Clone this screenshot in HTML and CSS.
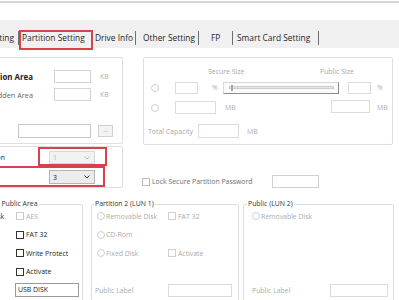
FILE: index.html
```html
<!DOCTYPE html>
<html lang="en">
<head>
<meta charset="utf-8">
<title>Partition Setting</title>
<link rel="stylesheet" href="styles.css">
</head>
<body>
<div class="titlebar"></div>
<nav class="tabbar">
  <span class="tab tab-basic">Basic Setting</span>
  <span class="tab tab-partition">Partition Setting</span>
  <span class="tab tab-drive">Drive Info</span>
  <span class="tab tab-other">Other Setting</span>
  <span class="tab tab-fp">FP</span>
  <span class="tab tab-smart">Smart Card Setting</span>
</nav>
<main class="content">
  <div class="top-row">
    <div class="left-col">
      <section class="box area-box">
        <div class="area-grid">
          <span class="lbl lbl-strong">Partition Area</span><span class="field w37"></span><span class="unit">KB</span>
          <span class="lbl lbl-soft">Hidden Area</span><span class="field w37"></span><span class="unit">KB</span>
        </div>
        <div class="path-row"><span class="field path"></span><span class="btn">...</span></div>
      </section>
      <section class="box count-box">
        <div class="count-grid">
          <span class="lbl">Number of Partition</span>
          <span class="select is-disabled"><span>1</span><svg width="6" height="4" viewBox="0 0 6 4"><polyline points="0.5,0.5 3,3 5.5,0.5" fill="none" stroke="currentColor" stroke-width="0.9"/></svg></span>
          <span class="lbl lbl-short">LUN</span>
          <span class="select"><span>3</span><svg width="6" height="4" viewBox="0 0 6 4"><polyline points="0.5,0.5 3,3 5.5,0.5" fill="none" stroke="currentColor" stroke-width="0.9"/></svg></span>
        </div>
      </section>
    </div>
    <div class="right-col">
      <section class="box size-box">
        <div class="size-head"><span class="head-secure">Secure Size</span><span>Public Size</span></div>
        <div class="size-row r1">
          <span class="radio"></span>
          <span class="field f-pct"></span>
          <span class="unit u-pct">%</span>
          <span class="slider"><span class="slider-track"><span class="slider-thumb"></span></span></span>
          <span class="field f-pct2"></span>
          <span class="unit u-end">%</span>
        </div>
        <div class="size-row r2">
          <span class="radio"></span>
          <span class="field f-mb"></span>
          <span class="unit u-mb">MB</span>
          <span class="field f-mb2"></span>
          <span class="unit u-end">MB</span>
        </div>
        <div class="size-row r3">
          <span class="total-lbl">Total Capacity</span>
          <span class="field f-total"></span>
          <span class="unit u-total">MB</span>
        </div>
      </section>
      <div class="lock-row">
        <span class="check is-soft"></span>
        <span class="lock-text">Lock Secure Partition Password</span>
        <span class="field f-lock"></span>
      </div>
    </div>
  </div>

  <div class="group-row">
    <section class="group g1">
      <div class="group-title title-right">Partition 1 (LUN 0) Public Area</div>
      <div class="group-grid">
        <span class="opt"><span class="radio on"></span>Removable Disk</span>
        <span class="opt is-disabled"><span class="check"></span>AES</span>
        <span class="opt"><span class="radio"></span>CD-Rom</span>
        <span class="opt"><span class="check"></span>FAT 32</span>
        <span class="opt"><span class="radio"></span>Fixed Disk</span>
        <span class="opt"><span class="check"></span>Write Protect</span>
        <span></span>
        <span class="opt"><span class="check"></span>Activate</span>
        <span class="opt-lbl">Public Label</span>
        <span class="field f-label">USB DISK</span>
      </div>
    </section>
    <section class="group g2 is-disabled">
      <div class="group-title">Partition 2 (LUN 1)</div>
      <div class="group-grid">
        <span class="opt"><span class="radio"></span>Removable Disk</span>
        <span class="opt"><span class="check"></span>FAT 32</span>
        <span class="opt"><span class="radio"></span>CD-Rom</span>
        <span></span>
        <span class="opt"><span class="radio"></span>Fixed Disk</span>
        <span class="opt"><span class="check"></span>Activate</span>
        <span></span><span></span>
        <span class="opt-lbl">Public Label</span>
        <span class="field f-label2"></span>
      </div>
    </section>
    <section class="group g3 is-disabled">
      <div class="group-title">Public (LUN 2)</div>
      <div class="group-grid">
        <span class="opt"><span class="radio"></span>Removable Disk</span>
        <span></span>
        <span></span><span></span>
        <span></span><span></span>
        <span></span><span></span>
        <span class="opt-lbl">Public Label</span>
        <span class="field f-label3"></span>
      </div>
    </section>
  </div>
</main>

<div class="mark mark-tab"></div>
<div class="mark mark-count1"></div>
<div class="mark mark-count2"></div>
</body>
</html>
```

FILE: styles.css
```css
* { box-sizing: border-box; }

body {
  margin: 0;
  width: 399px;
  height: 300px;
  overflow: hidden;
  position: relative;
  background: #fff;
  font-family: "Open Sans", "Liberation Sans", sans-serif;
  font-size: 6.9px;
  color: #333;
}

.titlebar {
  height: 19px;
  margin-top: 1px;
  border-top: 2px solid #d6d6d6;
}

/* tabs */
.tabbar {
  display: flex;
  height: 28px;
  padding-top: 11px;
  background: #f0f0f0;
  font-size: 8.4px;
  color: #262626;
}
.tab {
  flex: none;
  height: 14px;
  line-height: 14px;
  border-right: 1px solid #707070;
  white-space: nowrap;
  overflow: hidden;
}
.tab-basic { width: 60px; margin-left: -41px; text-align: right; padding-right: 4px; }
.tab-partition { width: 74px; padding-left: 3px; }
.tab-drive { width: 43px; padding-left: 2px; }
.tab-other { width: 63px; padding-left: 7px; }
.tab-fp { width: 34px; padding-left: 12px; }
.tab-smart { width: 86px; padding-left: 4px; }

.content { padding-top: 9px; }

.top-row { display: flex; }
.left-col {
  flex: none;
  width: 223px;
  margin-left: -100px;
  display: flex;
  flex-direction: column;
  gap: 2px;
}
.right-col { flex: none; width: 250px; margin-left: 20px; }

.box {
  border: 1px solid #dedede;
  border-radius: 2px;
}

/* generic controls */
.field {
  display: block;
  flex: none;
  height: 13px;
  border: 1px solid #d4d4d4;
  background: #fff;
}
.unit { color: #b0b0b0; flex: none; }
.radio {
  flex: none;
  width: 8px;
  height: 8px;
  border: 1px solid #cfcfcf;
  border-radius: 50%;
  background: #fff;
}
.check {
  flex: none;
  width: 8px;
  height: 8px;
  border: 1px solid #333;
  background: #fff;
}

/* area box */
.area-box { height: 87px; padding-top: 12px; }
.area-grid {
  display: grid;
  grid-template-columns: 153px 46px auto;
  grid-auto-rows: 13px;
  row-gap: 5px;
  align-items: center;
}
.lbl { justify-self: end; white-space: nowrap; }
.area-grid .lbl { padding-right: 21px; }
.lbl-strong { font-weight: 700; font-size: 7.9px; color: #1e1e1e; }
.lbl-soft { color: #666; font-size: 7.3px; }
.w37 { width: 37px; }
.path-row {
  display: flex;
  align-items: center;
  margin-top: 23px;
  padding-left: 117px;
}
.path { width: 73px; height: 14px; border-color: #c8c8c8; }
.btn {
  width: 15px;
  height: 12px;
  margin-left: 7px;
  border: 1px solid #d0d0d0;
  background: #f3f3f3;
  color: #888;
  font-size: 6px;
  line-height: 9px;
  text-align: center;
}

/* count box */
.count-box { height: 42px; padding-top: 4px; }
.count-grid {
  display: grid;
  grid-template-columns: 148px 46px;
  grid-template-rows: 13px 14px;
  row-gap: 6px;
  align-items: center;
}
.count-grid .lbl { padding-right: 44px; color: #222; }
.count-grid .lbl-short { padding-right: 56px; }
.select {
  display: flex;
  align-items: center;
  justify-content: space-between;
  height: 100%;
  padding: 0 4px 0 3px;
  border: 1px solid #b4b4b4;
  background: #ececec;
  color: #222;
}
.select.is-disabled {
  border-color: #d8d8d8;
  background: #f2f2f2;
  color: #b4b4b4;
}

/* size box */
.size-box { height: 88px; padding-top: 8px; color: #a8a8a8; }
.size-box .field { border-color: #dcdcdc; }
.size-head {
  display: flex;
  align-items: center;
  height: 10px;
  padding-left: 64px;
}
.head-secure { width: 112px; }
.size-row { display: flex; align-items: center; }
.size-row.r1 { margin-top: 5px; height: 13px; padding-left: 7px; }
.size-row.r2 { margin-top: 6px; height: 15px; padding-left: 7px; }
.size-row.r3 { margin-top: 9px; height: 14px; padding-left: 4px; }
.f-pct { width: 23px; height: 12px; margin-left: 16px; }
.u-pct { width: 11px; margin-left: 14px; }
.slider {
  display: flex;
  align-items: center;
  flex: none;
  width: 116px;
  height: 12px;
  padding: 0 4px 0 5px;
  border: 1px solid #d8d8d8;
  border-right-color: #8c8c8c;
  border-bottom-color: #8c8c8c;
  background: #fbfbfb;
}
.slider-track {
  display: flex;
  align-items: center;
  flex: 1;
  height: 3px;
  border: 1px solid #cdcdcd;
  background: #e6e6e6;
}
.slider-thumb {
  width: 2px;
  height: 6px;
  margin-left: 1px;
  background: #a8a8a8;
}
.f-pct2 { width: 23px; height: 12px; margin-left: 9px; }
.u-end { margin-left: 6px; }
.f-mb { width: 41px; margin-left: 16px; }
.u-mb { width: 106px; margin-left: 9px; }
.f-mb2 { width: 39px; margin-top: -2px; }
.size-row.r2 .u-end { margin-left: 7px; }
.total-lbl { width: 50px; flex: none; white-space: nowrap; }
.f-total { width: 41px; height: 14px; }
.u-total { margin-left: 8px; }

/* lock row */
.lock-row {
  display: flex;
  align-items: center;
  height: 13px;
  margin-top: 30px;
  margin-left: -1px;
  color: #6e6e6e;
}
.check.is-soft { border-color: #bdbdbd; }
.lock-text { width: 120px; margin-left: 2px; white-space: nowrap; }
.f-lock { width: 47px; border-color: #d0d0d0; }

/* bottom groups */
.group-row {
  display: flex;
  margin-top: 16px;
  margin-left: -61px;
}
.group {
  flex: none;
  height: 110px;
  border: 1px solid #dedede;
  border-radius: 2px;
}
.g1 { width: 144px; }
.g2 { width: 148px; margin-left: 8px; }
.g3 { width: 151px; margin-left: 4px; }
.group-title {
  display: table;
  margin: -6px 0 0 2px;
  padding: 0 1px;
  line-height: 10px;
  background: #fff;
  color: #333;
  white-space: nowrap;
}
.g3 .group-title { margin-left: 3px; }
.title-right { margin-left: auto; margin-right: 44px; }
.group-grid {
  display: grid;
  grid-template-columns: 71px auto;
  grid-auto-rows: 18.5px;
  align-items: center;
  margin-top: -2px;
  padding-left: 5px;
}
.g1 .group-grid { padding-left: 4px; grid-template-columns: 72px auto; }
.g3 .group-grid { grid-template-columns: 78px auto; padding-left: 8px; }
.opt {
  display: flex;
  align-items: center;
  gap: 2px;
  white-space: nowrap;
  color: #222;
}
.opt .radio { margin-right: -1px; }
.opt.is-disabled { color: #b0b0b0; }
.opt.is-disabled .check { border-color: #cccccc; }
.opt-lbl { white-space: nowrap; margin-left: -2px; }
.g3 .opt-lbl { margin-left: 0; }
.f-label {
  width: 64px;
  height: 14px;
  margin-left: -1px;
  padding-left: 2px;
  border-color: #9a9a9a;
  line-height: 12px;
  color: #222;
}
.f-label2 { width: 64px; }
.f-label3 { width: 58px; }

.group.is-disabled .opt,
.group.is-disabled .opt-lbl { color: #ababab; }
.group.is-disabled .check,
.group.is-disabled .radio { border-color: #d0d0d0; }
.group.is-disabled .field { border-color: #dcdcdc; }

/* red annotation marks drawn over the screenshot */
.mark {
  position: absolute;
  border: 2px solid #d6434a;
}
.mark-tab { left: 19px; top: 30px; width: 74px; height: 20px; }
.mark-count1 { left: 38px; top: 147px; width: 69px; height: 19px; }
.mark-count2 { left: -2px; top: 166px; width: 107px; height: 21px; }
```
